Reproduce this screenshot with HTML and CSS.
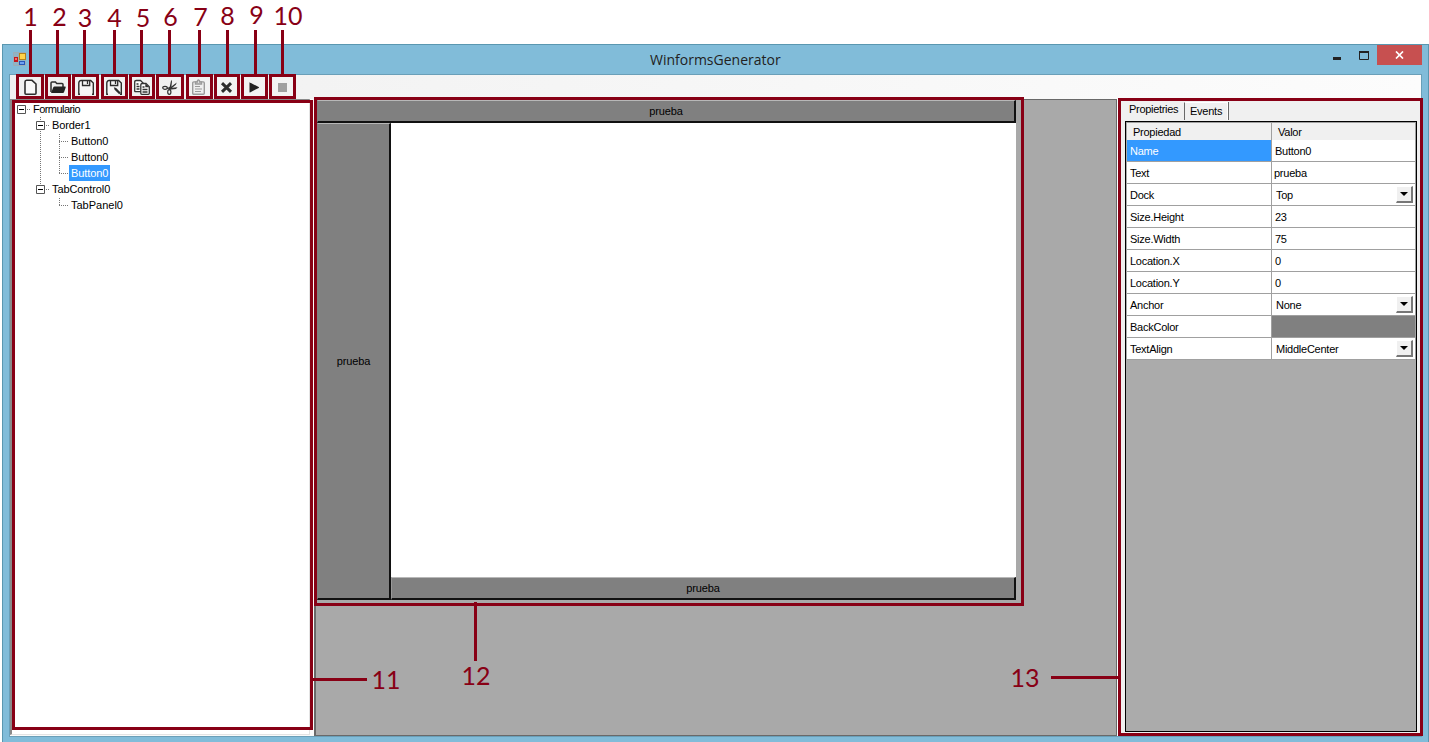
FILE: index.html
```html
<!DOCTYPE html>
<html lang="es">
<head>
<meta charset="utf-8">
<title>WinformsGenerator</title>
<link rel="stylesheet" href="styles.css">
</head>
<body>
<main class="window">
  <header class="titlebar">
    <svg class="app-icon" width="14" height="14" viewBox="0 0 14 14"><path d="M.5.5h12v13H.5zM.5 4.500h5M5.500.5v13" fill="#8fb4c6" stroke="#9aaeb8"/><rect x="1" y="5" width="4" height="5" fill="#c4161c"/><rect x="2" y="6" width="2" height="2" fill="#ef7568"/><rect x="6.500" y="1.500" width="6" height="6" fill="#ffd34a" stroke="#b5841c"/><rect x="6.500" y="9.500" width="5" height="3" fill="#6ea2f2" stroke="#2857b8"/></svg>
    <h1 class="title">WinformsGenerator</h1>
    <svg class="caption-glyph" width="38" height="12" viewBox="0 0 38 12"><path d="M0 7h8v3H0z" fill="#222"/><path d="M26.500 2v7.500h9V2" fill="none" stroke="#222"/><path d="M26 1h10v2H26z" fill="#222"/></svg>
    <button class="close" aria-label="Close"><svg width="9" height="8" viewBox="0 0 9 8"><path d="M1 .5l7 7M8 .5l-7 7" stroke="#fff" stroke-width="1.700"/></svg></button>
  </header>
  <div class="client">
    <nav class="toolbar">
      <span class="tool"><svg viewBox="0 0 16 16"><path d="M4.500 1.300h5.500l4 3.700v9.200q0 1-1 1H4q-1 0-1-1V3q0-1.700 1.500-1.700z" fill="#f8f8f8" stroke="#2d2d2d" stroke-width="1.600"/></svg></span>
      <span class="tool"><svg viewBox="0 0 16 16"><path d="M1 13V4q0-1 1-1h3.500l1.300 1.600H12q1 0 1 1V8" fill="#eee" stroke="#2d2d2d" stroke-width="1.500"/><path d="M1 14L3.200 8.500q.4-1 1.300-1H15q1 0 .7.9l-1.600 4.700q-.3.900-1.200.9z" fill="#222"/></svg></span>
      <span class="tool"><svg viewBox="0 0 16 16"><path d="M2 15.300H.8V4q0-1 .7-1.800.5-.7 1.600-.7h9.600L15.300 4v11.300H14" fill="#f6f6f6" stroke="#2d2d2d" stroke-width="1.400"/><path d="M4.500 1.500v5h7.200v-5M9.500 2v3" fill="none" stroke="#2d2d2d" stroke-width="1.300"/></svg></span>
      <span class="tool"><svg viewBox="0 0 16 16"><path d="M2 15.300H.8V4q0-1 .7-1.800.5-.7 1.600-.7h9.600L15.300 4v11.300H14" fill="#f6f6f6" stroke="#2d2d2d" stroke-width="1.400"/><path d="M4.500 1.500v5h7.200v-5M9.500 2v3" fill="none" stroke="#2d2d2d" stroke-width="1.300"/><path d="M7.800 8.300l.8 2.400 4.600 4.600 1.600-1.600-4.600-4.600z" fill="#2d2d2d"/></svg></span>
      <span class="tool"><svg viewBox="0 0 16 16"><g fill="#fff" stroke="#333" stroke-width="1.300"><path d="M2.200 1.500h4.300l2.800 2.700v8.500H1.500q-.8 0-.8-.8V2.800q0-1.300 1.500-1.300z"/><path d="M8.300 4.500h3.700l3.300 3.300v6.500q0 1-1 1H7.800q-1 0-1-1V5.800q0-1.300 1.500-1.300z"/></g><path d="M2.500 5h2M2.500 7.500h3M2.500 10h3M8.500 8h2M8.500 10.500h5M8.500 13h5" stroke="#333" stroke-width="1.300"/><path d="M11.300 4.500v3.700h4z" fill="#333"/></svg></span>
      <span class="tool"><svg viewBox="0 0 16 16"><path d="M9.200.8L10 2.500 9.300 8.500 6 10 7.800 7.500z" fill="#333"/><path d="M14.800 3.500l-1 2.300L9 9.800 8 8.500z" fill="#333"/><path d="M7.500 9l8-.8-1.500 1.800-4.500.4-2.500.6z" fill="#333"/><g fill="none" stroke="#333" stroke-width="1.200"><ellipse cx="3" cy="8.800" rx="2.300" ry="1.500"/><ellipse cx="7.300" cy="13" rx="1.600" ry="2.300"/><path d="M5 9.300l3-.5M7 11l1.500-2"/></g></svg></span>
      <span class="tool"><svg viewBox="0 0 16 16"><g fill="none" stroke="#9b9b9b" stroke-width="1.400"><rect x="2.700" y="2.900" width="11.600" height="12.400" rx="1" fill="#eee"/><path d="M5.500 5V3h1.800q0-2 1.200-2t1.200 2h1.800v2z" fill="#ddd"/><path d="M5 7.500h5M5 10h7M5 12.500h6" stroke-width="1.200"/></g></svg></span>
      <span class="tool"><svg viewBox="0 0 16 16"><path d="M4 4.200l9 8.600M13 4.200l-9 8.600" stroke="#2d2d2d" stroke-width="3"/></svg></span>
      <span class="tool"><svg viewBox="0 0 16 16"><path d="M3.500 3.700q0-.5.500-.3l8.700 4.700q.6.400 0 .8L4 13.400q-.5.200-.5-.3z" fill="#222"/></svg></span>
      <span class="tool"><svg viewBox="0 0 16 16"><path d="M4 4h9v9H4z" fill="#a0a0a0"/></svg></span>
    </nav>
    <div class="workspace">
      <aside class="tree">
        <svg class="guides" width="100" height="120" viewBox="0 0 100 120"><path d="M15 9.500h4M34 25.500h4M47 41.500h10M47 57.500h10M47 73.500h10M34 89.500h4M47 105.500h10M28.500 17v4M28.500 31v54M47.500 34v40M47.500 98v8" fill="none" stroke="#777" stroke-dasharray="1 1"/><g fill="#fff" stroke="#555"><path d="M5.500 5.500h8v8h-8zM24.500 21.500h8v8h-8zM24.500 85.500h8v8h-8z"/></g><path d="M7 9.500h5M26 25.500h5M26 89.500h5" stroke="#000"/></svg>
        <ul class="nodes">
          <li class="node root">Formulario</li>
          <li class="node level1">Border1</li>
          <li class="node level2">Button0</li>
          <li class="node level2">Button0</li>
          <li class="node level2"><span class="selected">Button0</span></li>
          <li class="node level1">TabControl0</li>
          <li class="node level2 panel">TabPanel0</li>
        </ul>
      </aside>
      <section class="canvas">
        <div class="form">
          <div class="btn top">prueba</div>
          <div class="btn left">prueba</div>
          <div class="body"></div>
          <div class="btn bottom">prueba</div>
        </div>
      </section>
      <aside class="props">
        <div class="tabs"><span class="tab active">Propietries</span><span class="tab idle">Events</span></div>
        <div class="grid">
          <div class="row head"><span class="key">Propiedad</span><span class="value">Valor</span></div>
          <div class="row"><span class="key picked">Name</span><span class="value">Button0</span></div>
          <div class="row"><span class="key">Text</span><span class="value edited">prueba</span></div>
          <div class="row"><span class="key">Dock</span><span class="value combo">Top<i class="drop"></i></span></div>
          <div class="row"><span class="key">Size.Height</span><span class="value">23</span></div>
          <div class="row"><span class="key">Size.Width</span><span class="value">75</span></div>
          <div class="row"><span class="key">Location.X</span><span class="value">0</span></div>
          <div class="row"><span class="key">Location.Y</span><span class="value">0</span></div>
          <div class="row"><span class="key">Anchor</span><span class="value combo">None<i class="drop"></i></span></div>
          <div class="row"><span class="key">BackColor</span><span class="value swatch"></span></div>
          <div class="row"><span class="key">TextAlign</span><span class="value combo">MiddleCenter<i class="drop"></i></span></div>
        </div>
      </aside>
    </div>
  </div>
</main>
<svg class="callouts" width="1429" height="742" viewBox="0 0 1429 742">
  <g fill="none" stroke="#880015" stroke-width="3">
    <path d="M17.500 75.500h25v22h-25zM46.500 75.500h23v22h-23zM73.500 75.500h24v22h-24zM102.500 75.500h24v22h-24zM130.500 75.500h23v22h-23zM157.500 75.500h25v22h-25zM187.500 75.500h24v22h-24zM215.500 75.500h23v22h-23zM242.500 75.500h24v22h-24zM270.500 75.500h24v22h-24z"/>
    <path d="M30.500 30v44M57.500 30v44M84.500 30v44M114.500 30v44M141.500 30v44M169.500 30v44M199.500 30v44M227.500 30v44M255.500 30v44M282.500 30v44"/>
    <path d="M13.500 101.500h298v627h-298zM315.500 98.500h707v506h-707zM1119.500 99.500h302v635h-302z"/>
    <path d="M313 679.500h54M475.500 602v59M1051 677.500h67"/>
  </g>
  <g class="numbers">
    <text x="30.500" y="26">1</text><text x="59.500" y="26">2</text><text x="85" y="27">3</text><text x="114.500" y="27">4</text><text x="143" y="27">5</text><text x="170.500" y="26">6</text><text x="200.500" y="26">7</text><text x="227.500" y="25">8</text><text x="256.500" y="24">9</text><text x="288" y="25">10</text>
    <text x="386" y="689">11</text><text x="476" y="685">12</text><text x="1025" y="687">13</text>
  </g>
</svg>
</body>
</html>
```
FILE: styles.css
```css
* { box-sizing: border-box; }
body { margin: 0; width: 1429px; height: 742px; overflow: hidden; background: #fff; font: 11px/16px "Liberation Sans", Arial, sans-serif; letter-spacing: -0.25px; color: #000; position: relative; padding: 44px 0 0 2px; }
.window { width: 1427px; height: 698px; background: #81bcd9; border: solid #5a97b0; border-width: 1px 1px 0; padding: 0 6px; }
.titlebar { height: 29px; display: flex; align-items: flex-start; }
.app-icon { margin: 7px 0 0 4px; flex: none; }
.title { flex: 1; margin: 5px 0 0; padding-left: 623px; font: 14px/20px "Open Sans", sans-serif; letter-spacing: 0; color: #222; }
.caption-glyph { margin: 5px 6px 0 0; flex: none; }
.close { width: 45px; height: 20px; padding: 0; border: 0; background: #c75050; display: flex; align-items: center; justify-content: center; flex: none; }
.client { height: 663px; border: 1px solid #6a9fb8; background: #fafafa; display: flex; flex-direction: column; }
.toolbar { height: 24px; flex: none; padding-left: 6px; display: flex; background: linear-gradient(90deg, #f0f0f0, #f3f3f3 300px, #fcfcfc); }
.tool { width: 28px; height: 24px; display: grid; place-items: center; }
.tool svg { width: 16px; height: 16px; }
.workspace { flex: 1; display: flex; min-height: 0; }
.tree { width: 300px; background: #fff; border: solid; border-width: 2px 1px 1px 2px; border-color: #8a8a8a #e3e3e3 #e3e3e3 #8a8a8a; position: relative; margin-bottom: 1px; flex: none; }
.guides { position: absolute; left: 0; top: -1px; }
.nodes { list-style: none; margin: 0; padding: 0 0 0 21px; position: relative; }
.node { height: 16px; letter-spacing: -0.1px; }
.root { letter-spacing: -0.55px; }
.level1 { padding-left: 19px; }
.level2 { padding-left: 38px; }
.panel { letter-spacing: 0; }
.selected { display: inline-block; height: 16px; margin-left: -2px; padding: 0 2px; background: #3399ff; color: #fff; }
.canvas { flex: 1; margin-left: 4px; background: #a9a9a9; border: solid #696969; border-width: 1px 1px 1px 2px; padding-left: 1px; }
.form { width: 699px; height: 500px; display: grid; grid-template: 23px 454px 23px / 74px 625px; }
.btn { background: #808080; border: solid; border-width: 1px 2px 2px 1px; border-color: #b8b8b8 #111 #111 #999; display: grid; place-items: center; padding-bottom: 1px; letter-spacing: -0.1px; }
.top { grid-column: 1 / 3; }
.left { grid-row: 2 / 4; }
.top, .left { border-left-color: #808080; }
.body { background: #fff; }
.props { width: 304px; flex: none; background: #f0f0f0; border-left: 1px solid #fff; padding: 3px 4px 4px 7px; display: flex; flex-direction: column; }
.tabs { height: 19px; display: flex; flex: none; }
.tab { height: 18px; }
.active { width: 58px; padding-left: 4px; line-height: 15px; letter-spacing: -0.3px; }
.idle { width: 44px; border: 1px solid #fff; border-left-color: #696969; border-bottom: 0; box-shadow: 1px 0 #696969; padding-left: 5px; line-height: 16px; margin-left: 1px; }
.grid { border: 1px solid #000; width: 292px; flex: 1; background: #ababab; }
.row { display: grid; grid-template-columns: 145px 144px; height: 22px; line-height: 23px; padding-left: 1px; }
.row > * { background: #fff; border: solid #a0a0a0; border-width: 0 1px 1px 0; padding-left: 3px; height: 22px; }
.head { height: 18px; line-height: 18px; border-top: 1px solid #a0a0a0; }
.head > * { background: #f0f0f0; border-bottom: 0; padding-left: 6px; height: 17px; }
.row > .picked { background: #3399ff; color: #fff; }
.row > .edited { padding-left: 2px; }
.row > .combo { display: flex; justify-content: space-between; padding: 0 2px 0 4px; }
.row > .swatch { background: #808080; }
.drop { width: 17px; height: 17px; margin-top: 2px; background: #f0f0f0; border: solid; border-width: 1px 2px 2px 1px; border-color: #fff #777 #777 #fff; display: grid; place-items: center; }
.drop::before { content: ""; border: 4px solid transparent; border-top-color: #000; border-bottom: 0; }
.callouts { position: absolute; left: 0; top: 0; pointer-events: none; }
.numbers { font: 25px Lato, sans-serif; letter-spacing: 0; fill: #880015; text-anchor: middle; }
```
